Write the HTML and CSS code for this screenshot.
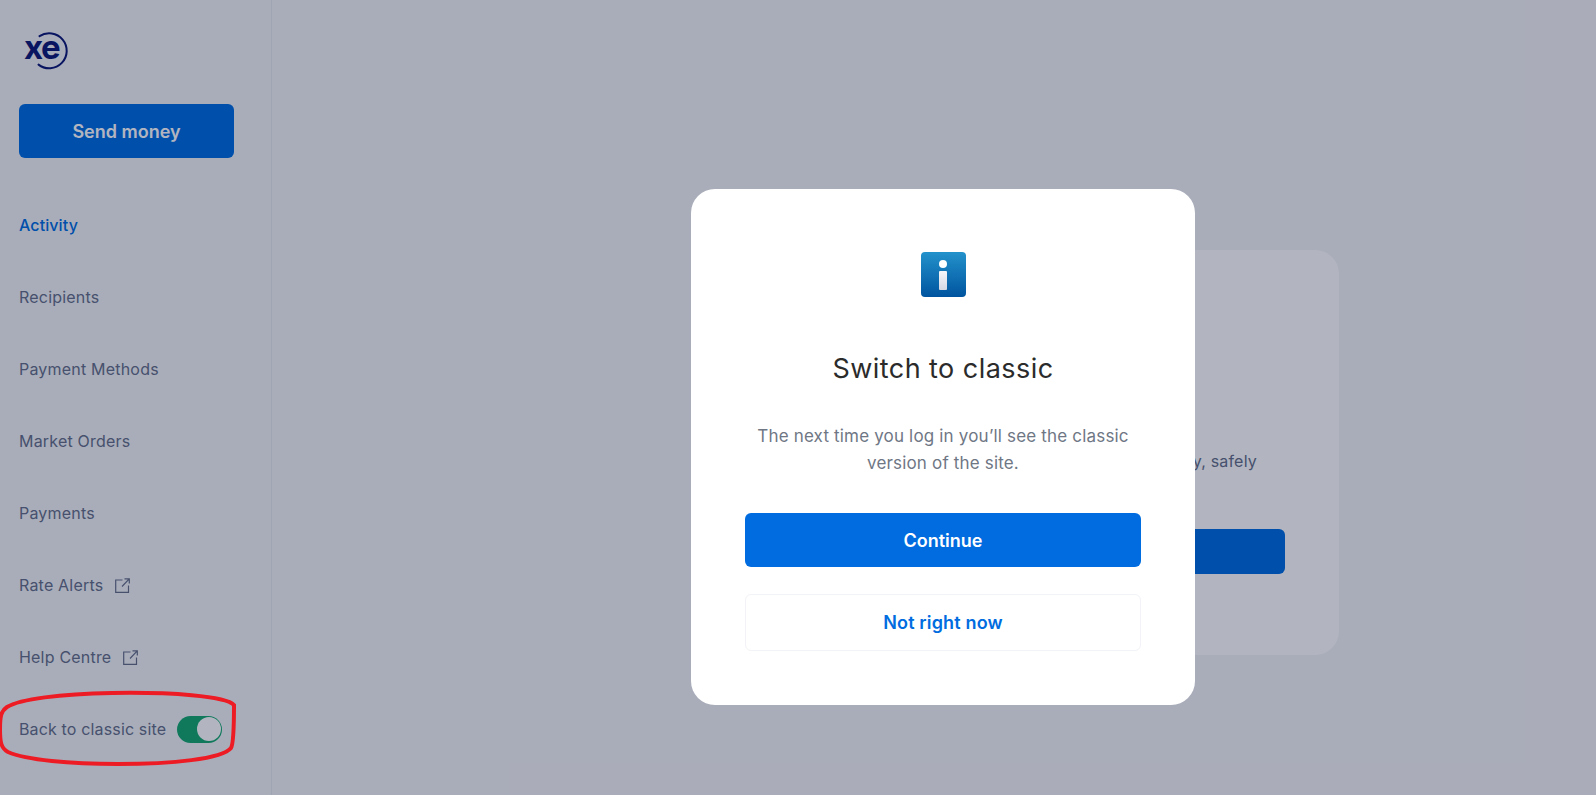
FILE: index.html
```html
<!DOCTYPE html>
<html lang="en">

<head>
  <meta charset="UTF-8">
  <title>Xe - Switch to classic</title>
  <link rel="stylesheet" href="styles.css">
</head>

<body>
  <aside class="sidebar">
    <div class="logo">
      <svg width="48" height="46" viewBox="0 0 48 46">
        <text x="1" y="33" class="logo-text">xe</text>
        <path d="M16.5 10.2 A17.5 17.5 0 1 1 15.5 38.6" fill="none" stroke="#0e1b76" stroke-width="2" stroke-linecap="round" />
      </svg>
    </div>
    <a href="#" class="send-btn">Send money</a>
    <nav class="side-nav">
      <a href="#" class="active">Activity</a>
      <a href="#">Recipients</a>
      <a href="#">Payment Methods</a>
      <a href="#">Market Orders</a>
      <a href="#">Payments</a>
      <a href="#">Rate Alerts
        <svg class="ext" width="15" height="15" viewBox="0 0 15 15">
          <path d="M7.5 2H.7V14.3H13.5V7.5M7 8.5L14 1.2M9.5 .8H14.3V5.5" fill="none" stroke="currentColor" stroke-width="1.2" />
        </svg>
      </a>
      <a href="#">Help Centre
        <svg class="ext" width="15" height="15" viewBox="0 0 15 15">
          <path d="M7.5 2H.7V14.3H13.5V7.5M7 8.5L14 1.2M9.5 .8H14.3V5.5" fill="none" stroke="currentColor" stroke-width="1.2" />
        </svg>
      </a>
      <div class="classic-row">
        <span>Back to classic site</span>
        <span class="toggle"><span class="knob"></span></span>
      </div>
    </nav>
  </aside>

  <main class="content">
    <div class="promo-card">
      <p class="promo-text">y, safely</p>
      <div class="promo-btn"></div>
    </div>
  </main>

  <div class="scrim"></div>

  <svg class="scribble" width="240" height="80" viewBox="0 0 240 80">
    <path d="M234 15 C226 6 170 2 112 3 C60 4 20 9 7 17 C1 21 0 26 0 40 C0 52 1 58 8 62 C26 70 70 74 118 74 C172 74 222 69 231 58 C234 53 234 30 234 15 Z" fill="none" stroke="#ed1c24" stroke-width="4" />
  </svg>

  <div class="modal-wrap">
    <div class="modal">
      <div class="info-icon"><span class="info-dot"></span><span class="info-bar"></span></div>
      <h2>Switch to classic</h2>
      <p>The next time you log in you’ll see the classic version of the site.</p>
      <button class="btn-primary">Continue</button>
      <button class="btn-secondary">Not right now</button>
    </div>
  </div>
</body>

</html>
```

FILE: styles.css
```css
* {
  margin: 0;
  padding: 0;
  box-sizing: border-box;
  font-family: 'Inter', 'Liberation Sans', sans-serif;
}

html,
body {
  height: 100%;
  overflow: hidden;
}

body {
  display: flex;
  background: #f3f4f6;
  color: #667089;
}

.sidebar {
  width: 272px;
  height: 795px;
  flex-shrink: 0;
  padding: 26px 0 0 19px;
  border-right: 1px solid #e6e8ec;
}

.logo {
  height: 46px;
  margin-left: 4px;
}

.logo-text {
  font-family: 'Inter', sans-serif;
  font-size: 33px;
  font-weight: 700;
  letter-spacing: -1.5px;
  fill: #0e1b76;
}

.send-btn {
  display: flex;
  align-items: center;
  justify-content: center;
  width: 215px;
  height: 54px;
  margin-top: 32px;
  background: #006ee1;
  color: white;
  border-radius: 6px;
  font-size: 18px;
  font-weight: 600;
  text-decoration: none;
}

.side-nav {
  margin-top: 31px;
}

.side-nav a,
.classic-row {
  display: flex;
  align-items: center;
  height: 72px;
  color: #667089;
  font-size: 16px;
  letter-spacing: 0.2px;
  text-decoration: none;
}

.side-nav a.active {
  color: #006ee1;
  font-weight: 500;
  letter-spacing: 0.1px;
}

.ext {
  margin-left: 12px;
}

.classic-row {
  gap: 11px;
  letter-spacing: 0.15px;
}

.toggle {
  display: flex;
  justify-content: flex-end;
  align-items: center;
  width: 45px;
  height: 27px;
  padding-right: 1px;
  border-radius: 14px;
  background: #18aa70;
}

.knob {
  width: 24px;
  height: 24px;
  border-radius: 50%;
  background: white;
}

.content {
  flex: 1;
  display: flex;
  justify-content: flex-end;
  align-items: flex-start;
  padding: 250px 257px 0 0;
}

.promo-card {
  width: 640px;
  height: 405px;
  padding: 0 54px;
  background: white;
  border-radius: 24px;
}

.promo-text {
  margin-top: 199px;
  padding-right: 28px;
  height: 24px;
  line-height: 24px;
  text-align: right;
  font-size: 16px;
  letter-spacing: 0.2px;
}

.promo-btn {
  height: 45px;
  margin-top: 56px;
  background: #006ee1;
  border-radius: 6px;
}

.scrim {
  position: absolute;
  inset: 0;
  background: rgba(0, 10, 45, 0.3);
}

.scribble {
  position: absolute;
  left: 0;
  top: 690px;
}

.modal-wrap {
  position: absolute;
  top: 189px;
  left: 691px;
}

.modal {
  display: flex;
  flex-direction: column;
  align-items: center;
  width: 504px;
  height: 516px;
  padding: 63px 54px 0;
  background: white;
  border-radius: 24px;
}

.info-icon {
  display: flex;
  flex-direction: column;
  align-items: center;
  width: 45px;
  height: 45px;
  padding-top: 8px;
  border-radius: 4px;
  background: linear-gradient(#2392cb, #00549f);
}

.info-dot {
  width: 8px;
  height: 8px;
  border-radius: 50%;
  background: white;
}

.info-bar {
  width: 8px;
  height: 19px;
  margin-top: 3px;
  border-radius: 1px;
  background: linear-gradient(#f6f7fa, #d4d8e4);
}

.modal h2 {
  margin-top: 54px;
  font-size: 27px;
  line-height: 36px;
  font-weight: 400;
  letter-spacing: 0.45px;
  color: #2b2b2b;
}

.modal p {
  margin-top: 36px;
  font-size: 17px;
  line-height: 27px;
  letter-spacing: 0.17px;
  text-align: center;
  color: #6f7785;
}

.modal button {
  width: 396px;
  border-radius: 6px;
  font-size: 18px;
  font-weight: 600;
  cursor: pointer;
}

.btn-primary {
  height: 54px;
  margin-top: 36px;
  border: none;
  background: #006ce0;
  color: white;
}

.btn-secondary {
  height: 57px;
  margin-top: 27px;
  border: 1px solid #f1f3f7;
  background: white;
  color: #006ce0;
  font-weight: 500;
  letter-spacing: 0.15px;
}
```
